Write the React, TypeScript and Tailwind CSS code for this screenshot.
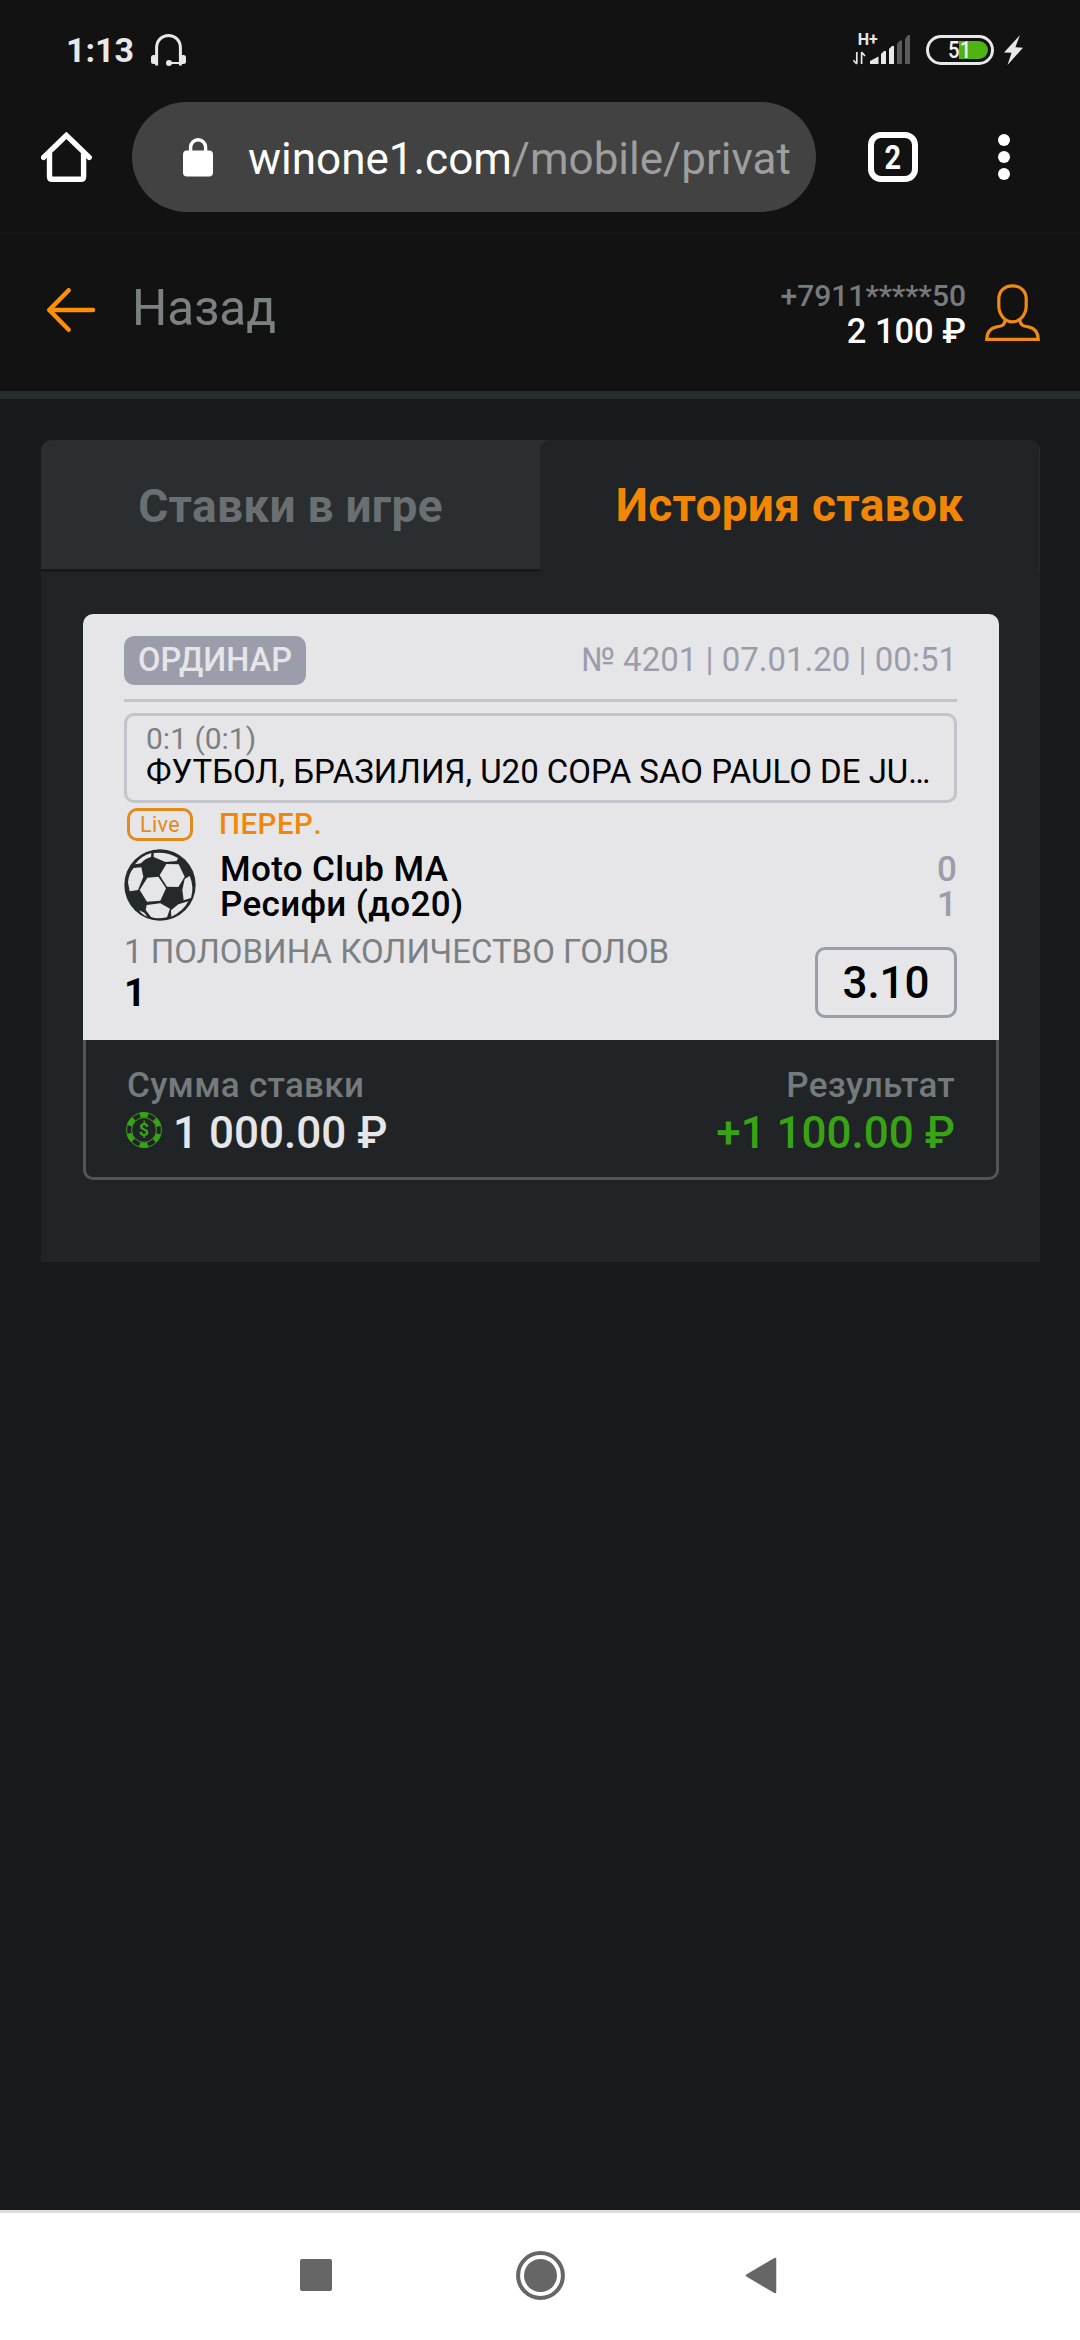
import React from 'react';

interface Team {
  name: string;
  score: number;
}

const teams: Team[] = [
  { name: 'Moto Club MA', score: 0 },
  { name: 'Ресифи (до20)', score: 1 },
];

function HeadsetIcon() {
  return (
    <svg width="35" height="32" viewBox="0 0 35 32" fill="none">
      <path d="M5.6 31.5V14C5.6-2.6 29.4-2.6 29.4 14V31.5" stroke="#e8e8e8" strokeWidth="3" />
      <rect x="0" y="21" width="6.5" height="9" rx="2.5" fill="#e8e8e8" />
      <rect x="28.5" y="21" width="6.5" height="9" rx="2.5" fill="#e8e8e8" />
      <path d="M18 29H30" stroke="#e8e8e8" strokeWidth="2" />
      <circle cx="18" cy="29" r="3" fill="#e8e8e8" />
    </svg>
  );
}

function SignalIcon() {
  return (
    <svg className="overflow-visible" width="58" height="34" viewBox="0 0 58 34">
      <text x="4.8" y="12.3" fontSize="16" fontWeight="700" fill="#e8e8e8">H+</text>
      <path d="M3.8 19V30.5M3.8 31L.4 27.2M8.6 31V19.5M8.6 19L12 23" stroke="#e8e8e8" strokeWidth="1.7" fill="none" />
      <path d="M17 31V28L25.5 23.5V31Z" fill="#e8e8e8" />
      <path d="M28 31V21L31 18H33V31Z" fill="#e8e8e8" />
      <path d="M36 31V16L39 13H41V31Z" fill="#e8e8e8" />
      <path d="M44 31V11L47 7.5H49V31Z" fill="#5a5a5a" />
      <path d="M52 31V6L55 2H57V31Z" fill="#5a5a5a" />
    </svg>
  );
}

function HomeIcon() {
  return (
    <svg width="51" height="50" viewBox="0 0 51 50" fill="none" stroke="#fff" strokeWidth="5.4">
      <path d="M2.6 25.4L25.4 3.4L48.2 25.4" strokeLinecap="round" />
      <path d="M8.5 21V44.4Q8.5 47.2 11.3 47.2H39.8Q42.6 47.2 42.6 44.4V21" />
    </svg>
  );
}

function LockIcon() {
  return (
    <svg width="30" height="39" viewBox="0 0 30 39">
      <rect x="0" y="12.6" width="30" height="26" rx="4" fill="#fff" />
      <path d="M7.6 15V9.3a7.5 7.5 0 0 1 15 0V15" fill="none" stroke="#fff" strokeWidth="3.4" />
    </svg>
  );
}

function BackIcon() {
  return (
    <svg width="50" height="46" viewBox="0 0 50 46" fill="none" stroke="#fe9008" strokeWidth="4.4" strokeLinecap="round" strokeLinejoin="round">
      <path d="M22.7 3.2L3.2 23L22.7 42.8M3.2 23H47" />
    </svg>
  );
}

function UserIcon() {
  return (
    <svg width="55" height="58" viewBox="0 0 55 58" fill="none" stroke="#f08a12" strokeWidth="3.2">
      <path d="M27.5 1.8C19 1.8 13.8 7.6 13.8 15V22C13.8 30 19.6 37.8 27.5 37.8C35.4 37.8 41.2 30 41.2 22V15C41.2 7.6 36 1.8 27.5 1.8Z" />
      <path d="M20.2 36C19.6 42 15.5 42.2 11.5 42.9C5 44.3 1.9 49 1.7 55.3H53.3C53.1 49 50 44.3 43.5 42.9C39.5 42.2 35.4 42 34.8 36" />
    </svg>
  );
}

function BallIcon() {
  return (
    <svg width="72" height="72" viewBox="161 477 216 216">
      <circle cx="269" cy="585" r="107" fill="#24292b" />
      <g fill="#e6e6e9" strokeLinejoin="round">
        <path d="M231 563L264 560L287 595L270 632L230 635L208 600Z" />
        <path d="M288 522L325 523L343 560L324 591L290 590L268 556Z" />
        <path d="M250 489Q290 484 323 504L319 513L285 516L250 501Z" />
        <path d="M194 523Q212 497 243 489L242 501Q225 505 212 520Z" />
        <path d="M173 577Q175 550 190 534L213 532L219 560L203 600L178 604Z" />
        <path d="M229 645L270 640L299 656L290 682Q260 688 242 681L226 660Z" />
        <path d="M302 661L324 643L354 634Q338 665 303 680Z" />
        <path d="M343 567L358 558Q372 590 362 624L340 631L336 600Z" />
        <path d="M206 661L222 668L231 680Q217 676 206 661Z" />
      </g>
    </svg>
  );
}

function ChipIcon() {
  return (
    <svg className="mb-[6px] -ml-px" width="36" height="36" viewBox="0 0 36 36" fill="none" stroke="#38a315">
      <circle cx="18" cy="18" r="17.4" strokeWidth="1" />
      <circle cx="18" cy="18" r="12.4" strokeWidth="1" />
      <circle cx="18" cy="18" r="15.2" strokeWidth="5" strokeDasharray="8.2 7.717" transform="rotate(-105.5 18 18)" />
      <text x="18" y="24.2" textAnchor="middle" fontSize="18" fontWeight="700" fill="#38a315" stroke="none">$</text>
    </svg>
  );
}

function StatusBar() {
  return (
    <div className="flex h-[100px] items-center pl-[66px] pr-[57px]">
      <span className="text-[34px] leading-10 font-bold text-[#e8e8e8]">1:13</span>
      <div className="ml-[17px]">
        <HeadsetIcon />
      </div>
      <div className="ml-auto flex items-center">
        <SignalIcon />
        {/* Battery */}
        <div className="relative ml-[15px] flex h-[30px] w-[68px] items-center justify-center rounded-full border-3 border-[#e8e8e8]">
          <div className="absolute top-[3px] right-[3px] h-[18px] w-[29px] rounded-r-full bg-[#4fb314]" />
          <span className="relative scale-x-85 text-[24px] leading-6 font-medium text-[#f2f2f2]">51</span>
        </div>
        <svg className="ml-[10px]" width="19" height="30" viewBox="0 0 19 30">
          <path d="M16 0L0 17.5L7.6 17.8L3.5 30L19 12.7L11.4 12.2Z" fill="#e8e8e8" />
        </svg>
      </div>
    </div>
  );
}

function BrowserBar() {
  return (
    <div className="flex h-[134px] items-start border-b-2 border-[#161616] pl-[41px] pr-[70px] pt-[2px]">
      <div className="flex h-[110px] items-center">
        <HomeIcon />
      </div>
      <div className="ml-[40px] flex h-[110px] w-[684px] items-center rounded-full bg-[#424242] pl-[51px]">
        <LockIcon />
        <span className="ml-[35px] pt-[3px] whitespace-nowrap text-[44px] leading-[52px] text-white">
          winone1.com<span className="text-[#9e9e9e]">/mobile/privat</span>
        </span>
      </div>
      <div className="ml-[52px] flex h-[110px] items-center">
        <div className="flex size-[50px] items-center justify-center rounded-[13px] border-[6px] border-white text-[34px] leading-9 font-bold text-white">
          <span className="scale-x-85">2</span>
        </div>
      </div>
      <div className="ml-auto flex h-[110px] flex-col items-center justify-center gap-[5px]">
        <span className="size-3 rounded-full bg-white" />
        <span className="size-3 rounded-full bg-white" />
        <span className="size-3 rounded-full bg-white" />
      </div>
    </div>
  );
}

function Header() {
  return (
    <header className="flex h-[165px] items-start border-b-8 border-[#262c2e] pl-[46px] pr-[40px]">
      <div className="mt-[53px]">
        <BackIcon />
      </div>
      <span className="mt-[44px] ml-[36px] text-[49.5px] leading-[60px] text-[#7b8083]">Назад</span>
      <div className="mt-[45px] ml-auto text-right">
        <div className="text-[30px] leading-[34px] font-medium text-[#767b7e]">+7911*****50</div>
        <div className="text-[34.5px] leading-9 font-medium text-white">2 100 ₽</div>
      </div>
      <div className="mt-[50px] ml-[19px]">
        <UserIcon />
      </div>
    </header>
  );
}

function Tabs() {
  return (
    <div className="flex h-[132px] rounded-t-[11px] bg-[#2a2e31] text-[46px] leading-[54px] font-bold tracking-[0.3px]">
      <div className="w-[499px] border-b-3 border-[#17191a] pt-[39px] text-center text-[#6a6f72]">Ставки в игре</div>
      <div className="w-[499px] rounded-t-[11px] bg-[#212426] pt-[38px] text-center text-[#f28705]">История ставок</div>
    </div>
  );
}

function BetCard() {
  return (
    <div className="mx-[42px] mt-[42px] w-[916px]">
      <div className="h-[426px] rounded-t-[10px] bg-[#e6e6e9] pl-[41px] pr-[42px] pt-[22px]">
        <div className="flex h-[49px] items-start justify-between">
          <span className="h-[49px] w-[182px] rounded-[10px] bg-[#9c9dab] pt-1 text-center text-[32.5px] leading-10 font-medium text-[#e6e6e9]">
            ОРДИНАР
          </span>
          <span className="pt-1 text-[33px] leading-10 text-[#9c9dab]">№ 4201 | 07.01.20 | 00:51</span>
        </div>
        <div className="mt-[14px] h-[3px] bg-[#c3c3cc]" />

        {/* League */}
        <div className="mt-[11px] h-[90px] rounded-[10px] border-3 border-[#c3c3cc] pl-[19px] pr-5 pt-[7px]">
          <div className="text-[30px] leading-[31px] text-[#7b8083]">0:1 (0:1)</div>
          <div className="truncate text-[33px] leading-9 text-black">
            ФУТБОЛ, БРАЗИЛИЯ, U20 COPA SAO PAULO DE JUNIORES
          </div>
        </div>

        {/* Live status */}
        <div className="mt-[5px] flex h-[33px] items-center pl-[3px]">
          <span className="flex h-[33px] w-[66px] items-center justify-center rounded-[10px] border-3 border-[#e38a1c] text-[21.5px] leading-6 tracking-[0.4px] text-[#e38a1c]">
            Live
          </span>
          <span className="ml-[26px] pb-px text-[29.5px] leading-8 font-medium tracking-[0.5px] text-[#f28705] [font-kerning:none]">ПЕРЕР.</span>
        </div>

        {/* Teams */}
        <div className="mt-2 flex h-[72px]">
          <BallIcon />
          <div className="ml-[24px] flex-1 pt-[3px] text-[35px] leading-[35px] font-medium">
            {teams.map((team) => (
              <div key={team.name} className="flex justify-between">
                <span className="tracking-[0.35px] text-black">{team.name}</span>
                <span className="text-[#9c9dab]">{team.score}</span>
              </div>
            ))}
          </div>
        </div>

        <div className="flex justify-between">
          <div className="pt-[11px]">
            <div className="text-[33px] leading-10 text-[#7b8083]">1 ПОЛОВИНА КОЛИЧЕСТВО ГОЛОВ</div>
            <div className="text-[38px] leading-[42px] font-bold text-black">1</div>
          </div>
          <div className="mt-[26px] flex h-[71px] w-[142px] items-center justify-center rounded-[10px] border-3 border-[#9c9dab] text-[44px] leading-[52px] font-medium text-black">
            3.10
          </div>
        </div>
      </div>

      {/* Stake and result */}
      <div className="flex h-[140px] justify-between rounded-b-[10px] border-3 border-t-0 border-[#555] px-[41px] pt-[26px] font-medium">
        <div>
          <div className="text-[35px] leading-10 tracking-[0.3px] text-[#757a7d]">Сумма ставки</div>
          <div className="flex items-center text-[44px] leading-[54px] text-[#e6e6e9]">
            <ChipIcon />
            <span className="ml-[11px]">1 000.00 ₽</span>
          </div>
        </div>
        <div className="text-right">
          <div className="text-[35px] leading-10 tracking-[0.3px] text-[#757a7d]">Результат</div>
          <div className="text-[44px] leading-[54px] text-[#38a315]">+1 100.00 ₽</div>
        </div>
      </div>
    </div>
  );
}

function NavBar() {
  return (
    <nav className="flex h-[130px] items-start justify-between border-t-3 border-[#dcdcdc] bg-white pl-[300px] pr-[303px]">
      <div className="mt-[46px] size-8 rounded-[2px] bg-[#666]" />
      <svg className="mt-[38px] ml-1" width="49" height="49" viewBox="0 0 49 49">
        <circle cx="24.5" cy="24.5" r="22.4" fill="none" stroke="#666" strokeWidth="4" />
        <circle cx="24.5" cy="24.5" r="16.5" fill="#666" />
      </svg>
      <svg className="mt-[44px]" width="32" height="37" viewBox="0 0 32 37">
        <path d="M2 18.5L30 2V35Z" fill="#666" stroke="#666" strokeWidth="2.5" strokeLinejoin="round" />
      </svg>
    </nav>
  );
}

export default function App() {
  return (
    <div className="flex h-[2340px] w-[1080px] flex-col overflow-hidden bg-[#18191b] font-['Roboto',sans-serif]">
      <div className="bg-[#121212]">
        <StatusBar />
        <BrowserBar />
        <Header />
      </div>
      <main className="mx-[41px] mt-[41px] h-[822px] w-[999px] rounded-t-[11px] bg-[#212426]">
        <Tabs />
        <BetCard />
      </main>
      <div className="mt-auto">
        <NavBar />
      </div>
    </div>
  );
}
